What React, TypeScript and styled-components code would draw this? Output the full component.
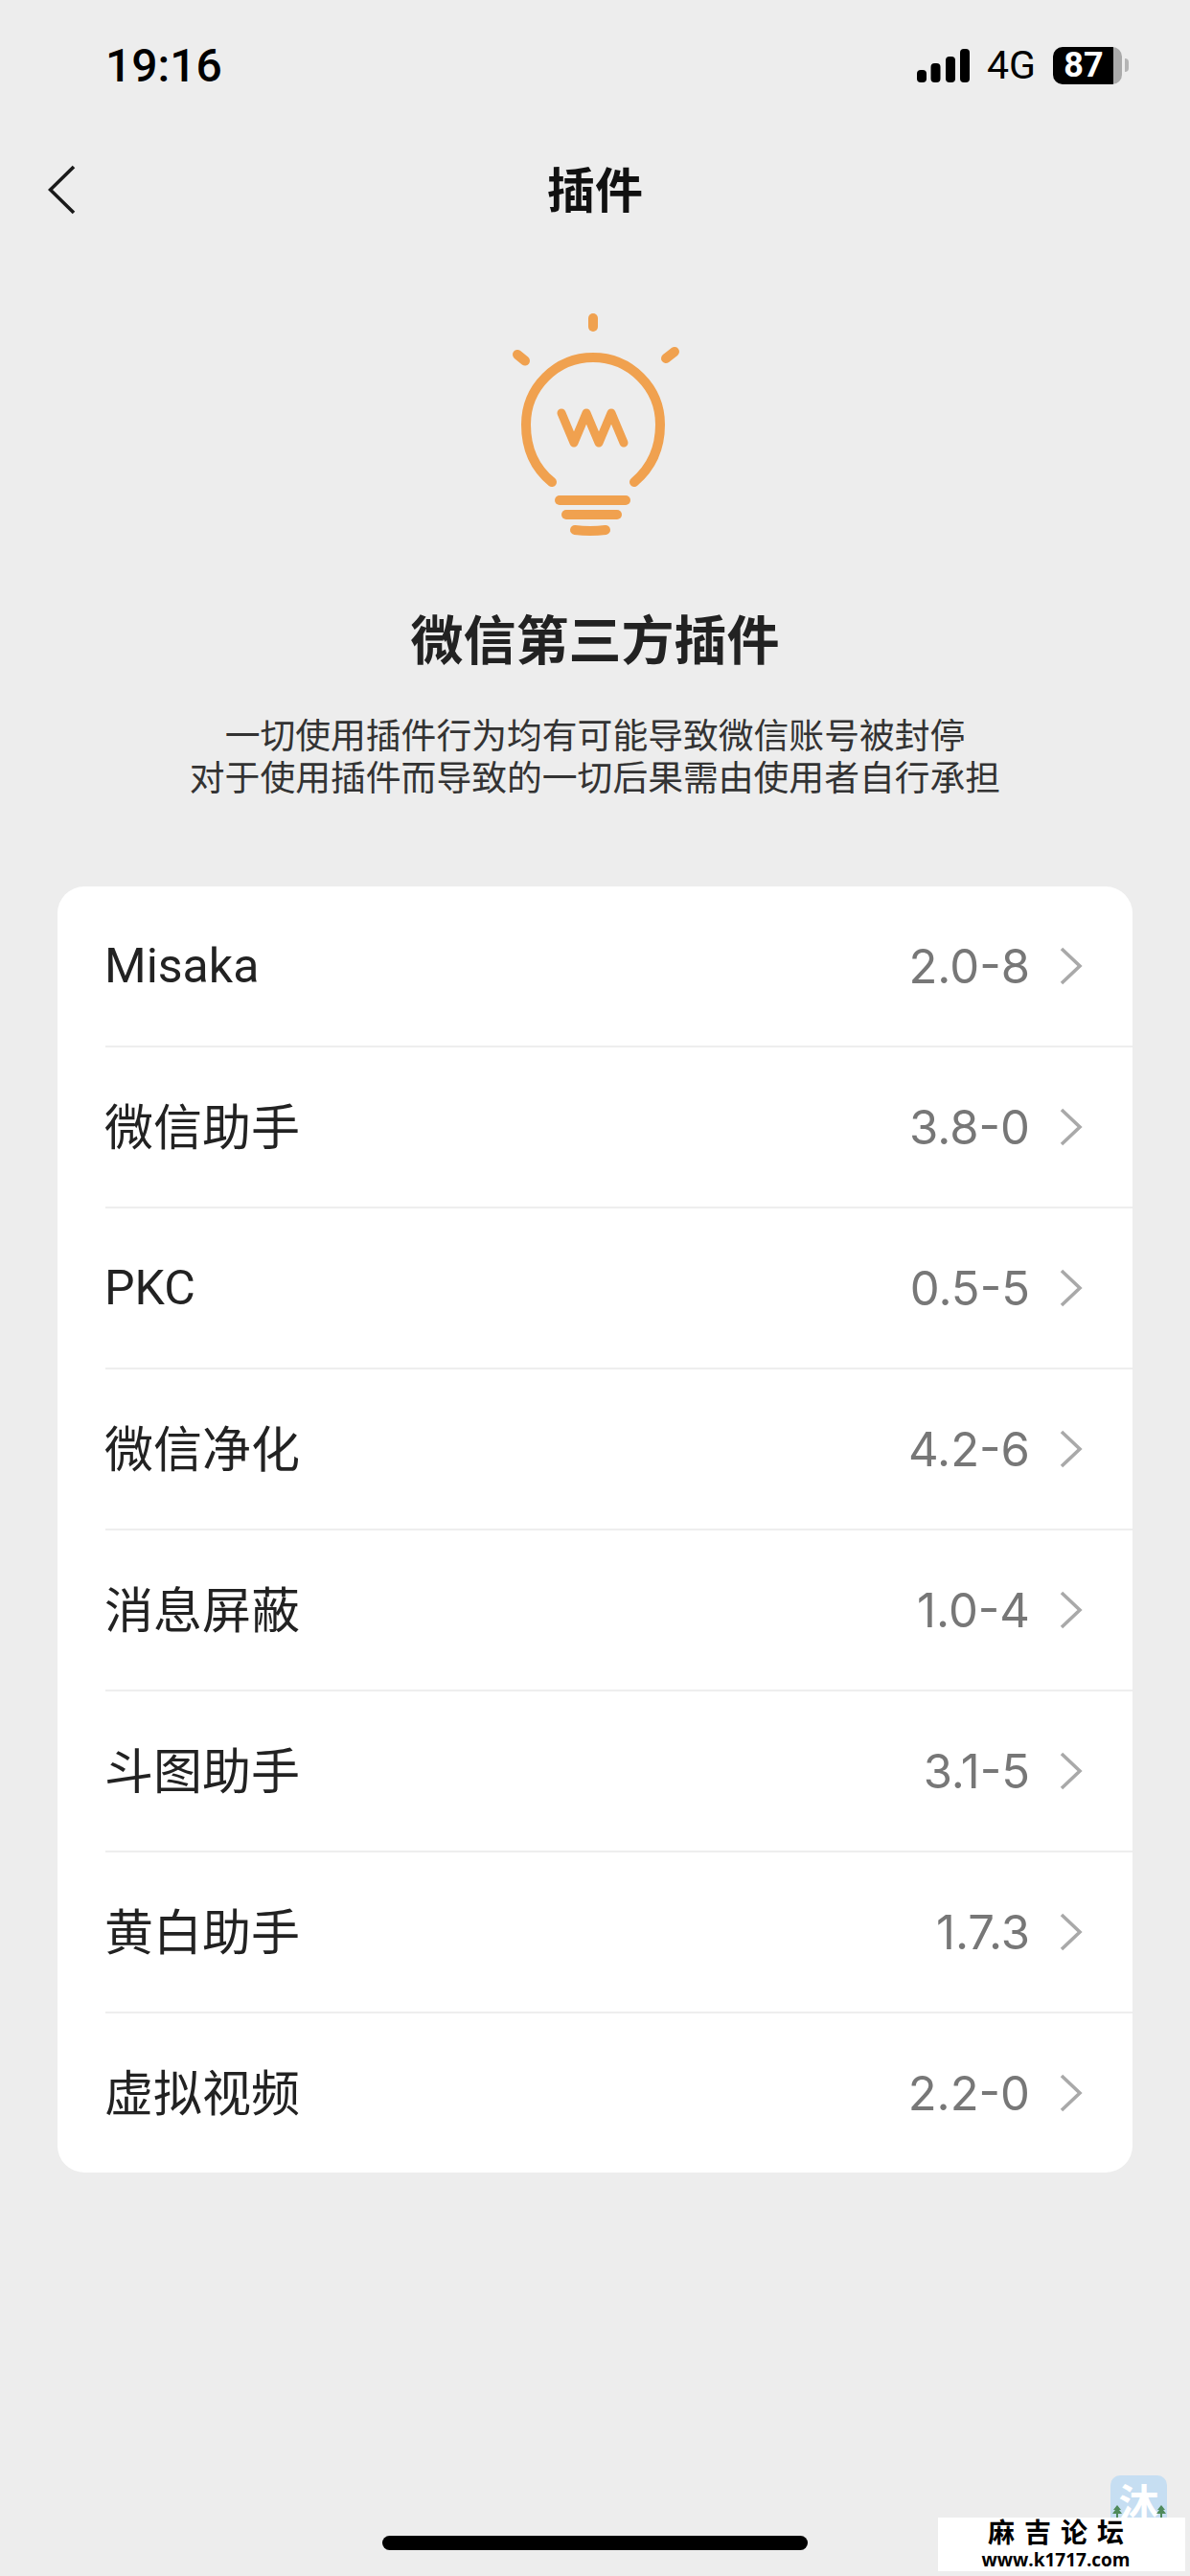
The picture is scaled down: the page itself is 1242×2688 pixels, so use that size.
import React, { FC } from 'react'
import styled, { createGlobalStyle } from 'styled-components'

const GlobalStyle = createGlobalStyle`
  html,
  body {
    margin: 0;
    height: 100%;
    overflow: hidden;
    background: #ededed;
  }
`

const FONT = `Roboto, "Noto Sans CJK SC", sans-serif`

const Page = styled.div`
  position: relative;
  width: 1242px;
  height: 2688px;
  overflow: hidden;
  background: #ededed;
  font-family: ${FONT};
  color: #1a1a1a;
`

const StatusBar = styled.div`
  display: flex;
  align-items: center;
  justify-content: space-between;
  height: 136px;
  padding: 0 64px 0 110px;
`

const Time = styled.div`
  font-size: 48px;
  font-weight: 500;
  color: #000;
`

const StatusIcons = styled.div`
  display: flex;
  align-items: center;
  gap: 18px;
`

const NetworkLabel = styled.span`
  font-size: 41px;
  color: #000;
`

const Battery = styled.div`
  display: flex;
  align-items: center;
  justify-content: center;
  box-sizing: border-box;
  width: 72px;
  height: 39px;
  padding-right: 8px;
  border-radius: 10px;
  background: linear-gradient(to right, #000 63px, #aaa 63px);
  font-size: 36px;
  font-weight: 700;
  color: #fff;
`

const BatteryCap = styled.div`
  width: 4px;
  height: 14px;
  margin-left: -15px;
  border-radius: 0 4px 4px 0;
  background: #b5b5b5;
`

const NavBar = styled.div`
  display: grid;
  grid-template-columns: 1fr auto 1fr;
  align-items: center;
  height: 124px;
  padding: 0 50px;
`

const NavTitle = styled.h1`
  margin: 0;
  padding-bottom: 6px;
  font-size: 50px;
  font-weight: 700;
  color: #111;
`

const Hero = styled.div`
  display: flex;
  flex-direction: column;
  align-items: center;
  padding-top: 40px;
`

const Heading = styled.h2`
  margin: 59px 0 0;
  font-size: 55px;
  line-height: 80px;
  font-weight: 700;
  color: #222;
`

const Notice = styled.p`
  margin: 38px 0 0;
  font-size: 36.8px;
  line-height: 44px;
  text-align: center;
  color: #333;
`

const Card = styled.div`
  margin: 90px 60px 0;
  border-radius: 28px;
  background: #fff;
  padding-left: 50px;
`

const Row = styled.div`
  display: flex;
  align-items: center;
  justify-content: space-between;
  height: 168px;
  box-sizing: border-box;
  padding-right: 52px;
  border-bottom: 2px solid #eeeeee;

  &:last-child {
    height: 166px;
    border-bottom: none;
  }
`

const RowName = styled.span<{ $cjk: boolean }>`
  margin-left: -1px;
  font-size: ${({ $cjk }) => ($cjk ? '51px' : '50px')};
  color: #222;
  padding-bottom: ${({ $cjk }) => ($cjk ? '6px' : '0')};
`

const RowEnd = styled.div`
  display: flex;
  align-items: center;
  gap: 31px;
`

const Version = styled.span`
  font-family: Inter, sans-serif;
  font-size: 49px;
  color: #777;
`

const HomeBar = styled.div`
  position: absolute;
  left: 399px;
  bottom: 27px;
  width: 444px;
  height: 15px;
  border-radius: 8px;
  background: #000;
`

const StampIcon = styled.div`
  position: absolute;
  left: 1159px;
  top: 2583px;
  box-sizing: border-box;
  width: 59px;
  height: 44px;
  padding-top: 7px;
  border-radius: 10px 10px 0 0;
  background: #c6def2;
  color: #fff;
  font-size: 42px;
  font-weight: 700;
  line-height: 48px;
  text-align: center;
`

const StampTree = styled.svg<{ $side: 'left' | 'right' }>`
  position: absolute;
  bottom: 0;
  ${({ $side }) => ($side === 'left' ? 'left: 2px;' : 'right: 1px;')}
`

const Stamp = styled.div`
  position: absolute;
  left: 979px;
  top: 2627px;
  box-sizing: border-box;
  width: 258px;
  height: 56px;
  padding-right: 12px;
  background: #fff;
  color: #000;
  text-align: center;
`

const StampTitle = styled.div`
  font-size: 28px;
  font-weight: 700;
  line-height: 34px;
  letter-spacing: 10px;
  margin-right: -10px;
`

const StampUrl = styled.div`
  font-family: "Open Sans", sans-serif;
  font-size: 19px;
  font-weight: 700;
  line-height: 20px;
`

const ITEMS = [
  { name: 'Misaka', version: '2.0-8', cjk: false },
  { name: '微信助手', version: '3.8-0', cjk: true },
  { name: 'PKC', version: '0.5-5', cjk: false },
  { name: '微信净化', version: '4.2-6', cjk: true },
  { name: '消息屏蔽', version: '1.0-4', cjk: true },
  { name: '斗图助手', version: '3.1-5', cjk: true },
  { name: '黄白助手', version: '1.7.3', cjk: true },
  { name: '虚拟视频', version: '2.2-0', cjk: true }
]

const SignalIcon: FC = () => (
  <svg width="55" height="35" viewBox="0 0 55 35" fill="#000">
    <rect x="0" y="22" width="10" height="13" rx="4" />
    <rect x="14.500" y="15" width="10" height="20" rx="4" />
    <rect x="30" y="8" width="10" height="27" rx="4" />
    <rect x="45" y="0" width="10" height="35" rx="4" />
  </svg>
)

const BackIcon: FC = () => (
  <svg width="32" height="52" viewBox="0 0 32 52" fill="none" stroke="#1a1a1a" strokeWidth="3.6">
    <path d="M27 2 2.500 26 27 50" />
  </svg>
)

const ChevronIcon: FC = () => (
  <svg width="24" height="40" viewBox="0 0 24 40" fill="none" stroke="#a9a9a9" strokeWidth="3.6">
    <path d="M2 2 21 20 2 38" />
  </svg>
)

const BulbIcon: FC = () => (
  <svg width="240" height="270" viewBox="0 0 240 270" fill="none" stroke="#f0a14f" strokeLinecap="round" strokeLinejoin="round">
    <g strokeWidth="10">
      <path d="M118 32V41" />
      <path d="M39 70 47 76.500" />
      <path d="M203 67 194 74" />
      <path d="M75 203C54 186 48 165 48 143A70 70 0 0 1 188 143C188 165 181 186 161 203" />
    </g>
    <path d="M85 131 98 162 111 131 124 162 137 131 150 162" strokeWidth="9" />
    <g strokeWidth="10">
      <path d="M83 222H152" />
      <path d="M90 237H143" />
      <path d="M99 253Q115 255 131 253" />
    </g>
  </svg>
)

const App: FC = () => (
  <>
    <GlobalStyle />
    <Page>
      <StatusBar>
        <Time>19:16</Time>
        <StatusIcons>
          <SignalIcon />
          <NetworkLabel>4G</NetworkLabel>
          <Battery>87</Battery>
          <BatteryCap />
        </StatusIcons>
      </StatusBar>

      <NavBar>
        <BackIcon />
        <NavTitle>插件</NavTitle>
      </NavBar>

      <Hero>
        <BulbIcon />
        <Heading>微信第三方插件</Heading>
        <Notice>
          一切使用插件行为均有可能导致微信账号被封停
          <br />
          对于使用插件而导致的一切后果需由使用者自行承担
        </Notice>
      </Hero>

      <Card>
        {ITEMS.map((item) => (
          <Row key={item.name}>
            <RowName $cjk={item.cjk}>{item.name}</RowName>
            <RowEnd>
              <Version>{item.version}</Version>
              <ChevronIcon />
            </RowEnd>
          </Row>
        ))}
      </Card>

      <HomeBar />
      <StampIcon>
        沐
        <StampTree $side="left" width="10" height="13" viewBox="0 0 10 13" fill="#4f8a5b">
          <path d="M5 0 9 5H7L10 9H6V13H4V9H0L3 5H1Z" />
        </StampTree>
        <StampTree $side="right" width="10" height="13" viewBox="0 0 10 13" fill="#4f8a5b">
          <path d="M5 0 9 5H7L10 9H6V13H4V9H0L3 5H1Z" />
        </StampTree>
      </StampIcon>
      <Stamp>
        <StampTitle>麻吉论坛</StampTitle>
        <StampUrl>www.k1717.com</StampUrl>
      </Stamp>
    </Page>
  </>
)

export default App
